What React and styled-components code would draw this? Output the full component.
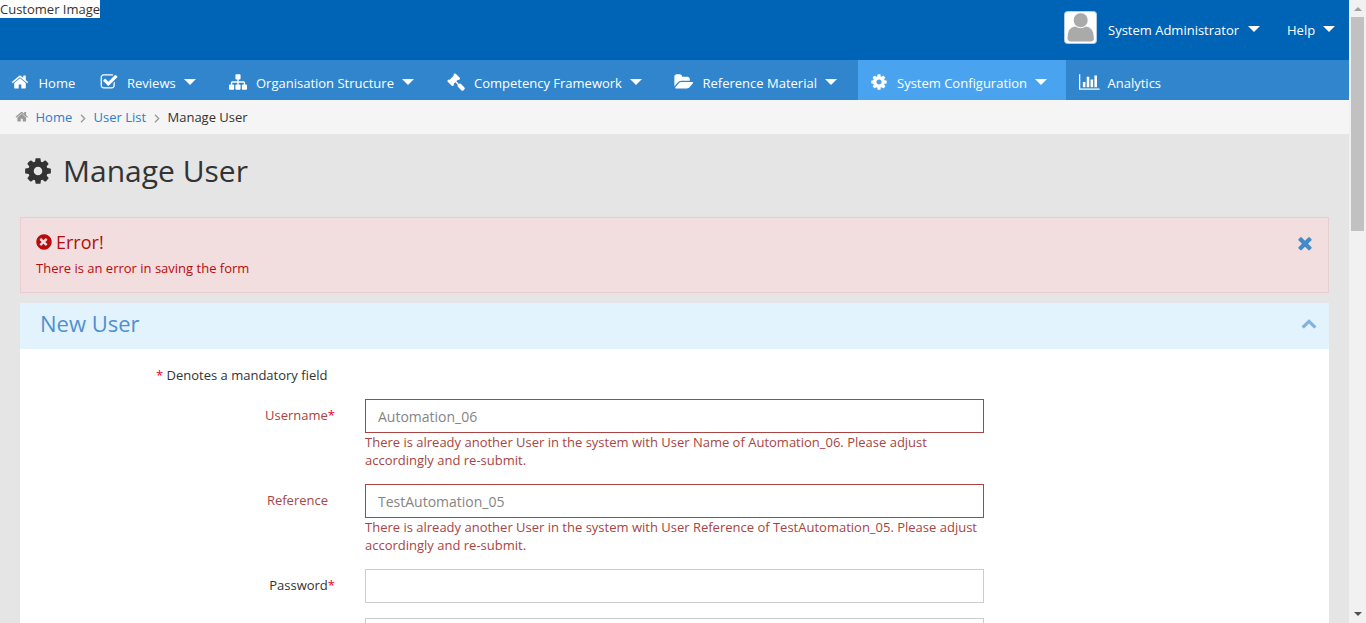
import React from "react";
import styled, { createGlobalStyle } from "styled-components";

const GlobalStyle = createGlobalStyle`
  *, *::before, *::after { box-sizing: border-box; }
  html, body { margin: 0; padding: 0; height: 623px; overflow: hidden; }
  body {
    font-family: "Open Sans", "Liberation Sans", sans-serif;
    font-size: 13px;
    line-height: 18px;
    color: #333;
    background: #e5e5e5;
  }
`;

const PATHS = {
  home: "M1472 992v480q0 26-19 45t-45 19h-384v-384h-256v384h-384q-26 0-45-19t-19-45v-480q0-1 .5-3t.5-3l575-474 575 474q1 2 1 6zm223-69l-62 74q-8 9-21 11h-3q-13 0-21-7l-692-577-692 577q-12 8-24 7-13-2-21-11l-62-74q-8-10-7-23.5t11-21.5l719-599q32-26 76-26t76 26l244 204v-195q0-14 9-23t23-9h192q14 0 23 9t9 23v408l219 182q10 8 11 21.5t-7 23.5z",
  check: "M1472 930v318q0 119-84.5 203.5t-203.5 84.5h-832q-119 0-203.5-84.5t-84.5-203.5v-832q0-119 84.5-203.5t203.5-84.5h832q63 0 117 25 15 7 18 23 3 17-9 29l-49 49q-10 10-23 10-3 0-9-2-23-6-45-6h-832q-66 0-113 47t-47 113v832q0 66 47 113t113 47h832q66 0 113-47t47-113v-254q0-13 9-22l64-64q10-10 23-10 6 0 12 3 20 8 20 29zm231-489l-814 814q-24 24-57 24t-57-24l-430-430q-24-24-24-57t24-57l110-110q24-24 57-24t57 24l263 263 647-647q24-24 57-24t57 24l110 110q24 24 24 57t-24 57z",
  sitemap: "M1792 1248v320q0 40-28 68t-68 28h-320q-40 0-68-28t-28-68v-320q0-40 28-68t68-28h96v-192h-512v192h96q40 0 68 28t28 68v320q0 40-28 68t-68 28h-320q-40 0-68-28t-28-68v-320q0-40 28-68t68-28h96v-192h-512v192h96q40 0 68 28t28 68v320q0 40-28 68t-68 28h-320q-40 0-68-28t-28-68v-320q0-40 28-68t68-28h96v-192q0-52 38-90t90-38h512v-192h-96q-40 0-68-28t-28-68v-320q0-40 28-68t68-28h320q40 0 68 28t28 68v320q0 40-28 68t-68 28h-96v192h512q52 0 90 38t38 90v192h96q40 0 68 28t28 68z",
  gavel: "M1771 1536q0 53-37 90l-107 108q-39 37-91 37-53 0-90-37l-363-364q-38-36-38-90 0-53 43-96l-256-256-126 126q-14 14-34 14t-34-14q2 2 12.5 12t12.5 13 10 11.5 10 13.5 6 13.5 5.5 16.5 1.5 18q0 38-28 68-3 3-16.5 18t-19 20.5-18.5 16.5-22 15.5-22 9-26 4.5q-40 0-68-28l-408-408q-28-28-28-68 0-13 4.5-26t9-22 15.5-22 16.5-18.5 20.5-19 18-16.5q30-28 68-28 10 0 18 1.5t16.5 5.5 13.5 6 13.5 10 11.5 10 13 12.5 12 12.5q-14-14-14-34t14-34l348-348q14-14 34-14t34 14q-2-2-12.5-12t-12.5-13-10-11.5-10-13.5-6-13.5-5.5-16.5-1.5-18q0-38 28-68 3-3 16.5-18t19-20.5 18.5-16.5 22-15.5 22-9 26-4.5q40 0 68 28l408 408q28 28 28 68 0 13-4.5 26t-9 22-15.5 22-16.5 18.5-20.5 19-18 16.5q-30 28-68 28-10 0-18-1.5t-16.5-5.5-13.5-6-13.5-10-11.5-10-13-12.5-12-12.5q14 14 14 34t-14 34l-126 126 256 256q43-43 96-43 52 0 91 37l363 363q37 39 37 91z",
  folder: "M1815 952q0 31-31 66l-336 396q-43 51-120.5 86.5t-143.5 35.5h-1088q-34 0-60.5-13t-26.5-43q0-31 31-66l336-396q43-51 120.5-86.5t143.5-35.5h1088q34 0 60.5 13t26.5 43zm-343-344v160h-832q-94 0-197 47.5t-164 119.5l-337 396-5 6q0-4-.5-12.5t-.5-12.5v-960q0-92 66-158t158-66h320q92 0 158 66t66 158v32h544q92 0 158 66t66 158z",
  cog: "M1152 896q0-106-75-181t-181-75-181 75-75 181 75 181 181 75 181-75 75-181zm512-109v222q0 12-8 23t-20 13l-185 28q-19 54-39 91 35 50 107 138 10 12 10 25t-9 23q-27 37-99 108t-94 71q-12 0-26-9l-138-108q-44 23-91 38-16 136-29 186-7 28-36 28h-222q-14 0-24.5-8.5t-11.5-21.5l-28-184q-49-16-90-37l-141 107q-10 9-25 9-14 0-25-11-126-114-165-168-7-10-7-23 0-12 8-23 15-21 51-66.5t54-70.5q-27-50-41-99l-183-27q-13-2-21-12.5t-8-23.5v-222q0-12 8-23t19-13l186-28q14-46 39-92-40-57-107-138-10-12-10-24 0-10 9-23 26-36 98.5-107.5t94.5-71.5q13 0 26 10l138 107q44-23 91-38 16-136 29-186 7-28 36-28h222q14 0 24.5 8.5t11.5 21.5l28 184q49 16 90 37l142-107q9-9 24-9 13 0 25 10 129 119 165 170 7 8 7 22 0 12-8 23-15 21-51 66.5t-54 70.5q26 50 41 98l183 28q13 2 21 12.5t8 23.5z",
  chart: "M640 896v512h-256v-512h256zm384-512v1024h-256v-1024h256zm1024 1152v128h-2048v-1536h128v1408h1920zm-640-896v768h-256v-768h256zm384-384v1152h-256v-1152h256z",
  error: "M1225 1118q0-27-19-45l-181-181 181-181q19-19 19-45 0-27-19-46l-90-90q-19-19-46-19-26 0-45 19l-181 181-181-181q-19-19-45-19-27 0-46 19l-90 90q-19 19-19 46 0 26 19 45l181 181-181 181q-19 18-19 45 0 27 19 46l90 90q19 19 46 19 26 0 45-19l181-181 181 181q19 19 45 19 27 0 46-19l90-90q19-19 19-46zm439-226q0 209-103 385.5t-279.5 279.5-385.5 103-385.5-103-279.5-279.5-103-385.5 103-385.5 279.5-279.5 385.5-103 385.5 103 279.5 279.5 103 385.5z",
  times: "M1490 1322q0 40-28 68l-136 136q-28 28-68 28t-68-28l-294-294-294 294q-28 28-68 28t-68-28l-136-136q-28-28-28-68t28-68l294-294-294-294q-28-28-28-68t28-68l136-136q28-28 68-28t68 28l294 294 294-294q28-28 68-28t68 28l136 136q28 28 28 68t-28 68l-294 294 294 294q28 28 28 68z",
  up: "M1683 1331l-166 165q-19 19-45 19t-45-19l-531-531-531 531q-19 19-45 19t-45-19l-166-165q-19-19-19-45.5t19-45.5l742-741q19-19 45-19t45 19l742 741q19 19 19 45.5t-19 45.5z",
};

const Svg = styled.svg`
  display: block;
  flex: none;
  fill: currentColor;
  overflow: visible;
`;

function Icon({ name, size, className }) {
  const units = name === "chart" ? 2048 : 1792;
  return (
    <Svg className={className} width={(size * units) / 1792} height={size} viewBox={`0 0 ${units} 1792`}>
      <path d={PATHS[name]} />
    </Svg>
  );
}

const Window = styled.div`
  display: flex;
  height: 623px;
`;

const Page = styled.div`
  width: 1349px;
  overflow: hidden;
`;

const Header = styled.header`
  display: flex;
  justify-content: space-between;
  align-items: flex-start;
  height: 60px;
  background: #0064b6;
  color: #fff;
`;

const CustomerImage = styled.div`
  width: 100px;
  height: 18px;
  background: #fff;
  color: #333;
  white-space: nowrap;
`;

const Account = styled.div`
  display: flex;
  align-items: center;
  height: 60px;
  padding-right: 14px;
`;

const Avatar = styled.svg`
  display: block;
  margin: -5px 11px 0 0;
`;

const AccountLink = styled.span`
  width: ${(p) => p.$width}px;
  white-space: nowrap;
`;

const Caret = styled.span`
  flex: none;
  width: 0;
  height: 0;
  margin-top: ${(p) => p.$top || 0}px;
  margin-left: 8px;
  margin-right: ${(p) => p.$right || 0}px;
  border: solid transparent;
  border-width: 6px 6px 0;
  border-top-color: #fff;
`;

const Nav = styled.nav`
  display: flex;
  height: 40px;
  background: #3085cd;
  color: #fff;
`;

const NavItem = styled.a`
  display: flex;
  width: ${(p) => p.$width}px;
  padding: 14px 0 0 11px;
  background: ${(p) => (p.$active ? "#4aa3ef" : "transparent")};
  white-space: nowrap;
`;

const NavIcon = styled.span`
  flex: none;
  width: ${(p) => p.$slot}px;
  margin-top: -1px;
  padding-left: ${(p) => p.$shift || 0}px;
`;

const Breadcrumb = styled.div`
  display: flex;
  height: 34px;
  padding: 8px 0 0 15px;
  background: #f5f5f5;
  white-space: nowrap;
`;

const CrumbIcon = styled(Icon)`
  margin: 2px 7.5px 0 -0.5px;
  color: #999;
`;

const CrumbLink = styled.a`
  width: ${(p) => p.$width}px;
  color: #2f7cd2;
`;

const CrumbArrow = styled.svg`
  margin: 6px 8px 0;
  fill: none;
  stroke: #999;
  stroke-width: 1.3;
`;

const Title = styled.h1`
  display: flex;
  height: 83px;
  margin: 0;
  padding: 16px 0 0 22px;
  font-size: 30px;
  line-height: 42px;
  font-weight: 400;
`;

const TitleIcon = styled(Icon)`
  margin: 6px 10.5px 0 0.5px;
`;

const Alert = styled.section`
  display: flex;
  justify-content: space-between;
  height: 76px;
  margin: 0 20px 10px;
  padding: 14px 15px;
  background: #f2dede;
  border: 1px solid #ebccd1;
  color: #b90a0d;
`;

const AlertTitle = styled.div`
  display: flex;
  gap: 3px;
  height: 22px;
  margin: -1px 0 6px;
  font-size: 18px;
  line-height: 22px;
`;

const AlertIcon = styled(Icon)`
  margin: 2px 0 0 -1px;
`;

const CloseIcon = styled(Icon)`
  margin: 1px -2px 0 0;
  color: #428bca;
`;

const Panel = styled.section`
  height: 400px;
  margin: 0 20px;
  background: #fff;
`;

const PanelHeader = styled.div`
  display: flex;
  justify-content: space-between;
  height: 46px;
  padding: 5px 12px 0 20px;
  background: #e2f3fe;
  color: #5190ce;
  font-size: 22px;
  line-height: 30px;
`;

const CollapseIcon = styled(Icon)`
  margin-top: 7px;
  color: #82b2de;
`;

const Mandatory = styled.div`
  margin: 17px 0 15px 136px;
  color: #333;
`;

const Star = styled.span`
  color: #f00020;
`;

const Row = styled.div`
  display: flex;
  align-items: flex-start;
  height: ${(p) => (p.$tall ? 85 : 49)}px;
`;

const Label = styled.label`
  display: flex;
  justify-content: flex-end;
  width: 315px;
  margin-right: 30px;
  padding-top: 7px;
  padding-right: ${(p) => (p.$required ? 0 : 7)}px;
  color: ${(p) => (p.$invalid ? "#a94442" : "#333")};
`;

const Field = styled.div`
  width: 619px;
`;

const Input = styled.input`
  display: block;
  width: 619px;
  height: 34px;
  padding: 2px 12px 2px;
  border: 1px solid ${(p) => (p.$invalid ? "#a94442" : "#ccc")};
  border-radius: 0;
  outline: 0;
  background: #fff;
  color: #858585;
  font: 14px/20px "Open Sans", sans-serif;
`;

const Help = styled.div`
  color: #a94442;
  white-space: nowrap;
`;

const Scrollbar = styled.div`
  display: flex;
  flex-direction: column;
  align-items: center;
  width: 17px;
  padding: 7px 0 7px 1px;
  background: #f1f1f1;
`;

const Thumb = styled.div`
  width: 13px;
  height: 214px;
  margin: 6px 1px auto 0;
  background: #c1c1c1;
`;

const ScrollArrow = styled.svg`
  display: block;
  margin-right: 1px;
  fill: ${(p) => (p.$dim ? "#a0a0a0" : "#505050")};
`;

const NAV = [
  { label: "Home", icon: "home", width: 88, slot: 27.5 },
  { label: "Reviews", icon: "check", width: 129, slot: 28, shift: 1, menu: true },
  { label: "Organisation Structure", icon: "sitemap", width: 218, slot: 28, shift: 1, menu: true },
  { label: "Competency Framework", icon: "gavel", width: 227, slot: 28, shift: 1, menu: true },
  { label: "Reference Material", icon: "folder", width: 196, slot: 29.5, shift: 2, menu: true },
  { label: "System Configuration", icon: "cog", width: 208, slot: 28, shift: 1, active: true, menu: true },
  { label: "Analytics", icon: "chart", width: 130, slot: 30.5, shift: 2 },
];

function Chevron() {
  return (
    <CrumbArrow width="6" height="9" viewBox="0 0 6 9">
      <path d="M1 0.8L4.7 4.5L1 8.2" />
    </CrumbArrow>
  );
}

function FormRow({ label, required, value = "", error }) {
  const invalid = Boolean(error);
  return (
    <Row $tall={invalid}>
      <Label $required={required} $invalid={invalid}>
        {label}
        {required && <Star>*</Star>}
      </Label>
      <Field>
        <Input $invalid={invalid} defaultValue={value} />
        {error && (
          <Help>
            {error}
            <br />
            accordingly and re-submit.
          </Help>
        )}
      </Field>
    </Row>
  );
}

export default function App() {
  return (
    <Window>
      <GlobalStyle />
      <Page>
        <Header>
          <CustomerImage>Customer Image</CustomerImage>
          <Account>
            <Avatar width="33" height="33" viewBox="0 0 33 33">
              <rect x="0.5" y="0.5" width="32" height="32" rx="3" fill="#fff" stroke="#b5cde2" />
              <path d="M3.5 27.5Q3.500 16 11 15.500Q16.500 18 22 15.500Q29.500 16 30 27.500Q29.500 30.500 27 30.500H6.500Q4 30.500 3.500 27.500Z" fill="#aaa" />
              <circle cx="16.700" cy="9.200" r="7.500" fill="#aaa" stroke="#fff" strokeWidth="0.900" />
            </Avatar>
            <AccountLink $width={132}>System Administrator</AccountLink>
            <Caret $top={-2} $right={27} />
            <AccountLink $width={28}>Help</AccountLink>
            <Caret $top={-2} />
          </Account>
        </Header>
        <Nav>
          {NAV.map((n) => (
            <NavItem key={n.label} $width={n.width} $active={n.active}>
              <NavIcon $slot={n.slot} $shift={n.shift}>
                <Icon name={n.icon} size={18} />
              </NavIcon>
              {n.label}
              {n.menu && <Caret $top={5} />}
            </NavItem>
          ))}
        </Nav>
        <Breadcrumb>
          <CrumbIcon name="home" size={13.5} />
          <CrumbLink $width={36}>Home</CrumbLink>
          <Chevron />
          <CrumbLink $width={52}>User List</CrumbLink>
          <Chevron />
          <span>Manage User</span>
        </Breadcrumb>
        <Title>
          <TitleIcon name="cog" size={30} />
          Manage User
        </Title>
        <Alert>
          <div>
            <AlertTitle>
              <AlertIcon name="error" size={18} />
              Error!
            </AlertTitle>
            There is an error in saving the form
          </div>
          <CloseIcon name="times" size={20} />
        </Alert>
        <Panel>
          <PanelHeader>
            New User
            <CollapseIcon name="up" size={16} />
          </PanelHeader>
          <Mandatory>
            <Star>*</Star> Denotes a mandatory field
          </Mandatory>
          <FormRow
            label="Username"
            required
            value="Automation_06"
            error="There is already another User in the system with User Name of Automation_06. Please adjust"
          />
          <FormRow
            label="Reference"
            value="TestAutomation_05"
            error="There is already another User in the system with User Reference of TestAutomation_05. Please adjust"
          />
          <FormRow label="Password" required />
          <FormRow label="" />
        </Panel>
      </Page>
      <Scrollbar>
        <ScrollArrow $dim width="8" height="4" viewBox="0 0 8 4">
          <path d="M0 4L4 0L8 4Z" />
        </ScrollArrow>
        <Thumb />
        <ScrollArrow width="8" height="4" viewBox="0 0 8 4">
          <path d="M0 0L4 4L8 0Z" />
        </ScrollArrow>
      </Scrollbar>
    </Window>
  );
}
